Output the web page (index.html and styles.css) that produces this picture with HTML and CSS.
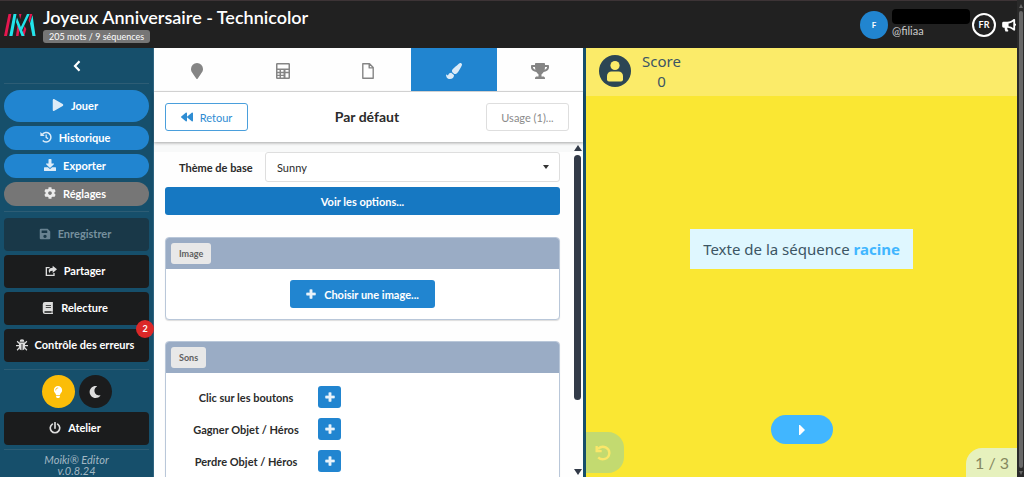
FILE: index.html
```html
<!DOCTYPE html>
<html lang="fr">
<head>
<meta charset="utf-8">
<title>Moiki Editor</title>
<link rel="stylesheet" href="styles.css">
</head>
<body>
<svg class="sprite" aria-hidden="true">
  <symbol id="play" viewBox="0 0 448 512"><path d="M424.4 214.7L72.4 6.6C43.8-10.3 0 6.1 0 47.9V464c0 37.5 40.7 60.1 72.4 41.3l352-208c31.4-18.5 31.5-64.1 0-82.6z"/></symbol>
  <symbol id="history" viewBox="0 0 16 16"><path d="M3.2 4.6A6.3 6.3 0 1 1 3.6 12.6" fill="none" stroke="currentColor" stroke-width="2"/><path d="M.5 1.2v5.6h5.8z"/><path d="M8.2 4.5v4l2.6 1.8" fill="none" stroke="currentColor" stroke-width="1.7"/></symbol>
  <symbol id="download" viewBox="0 0 512 512"><path d="M216 0h80c13.300 0 24 10.700 24 24v168h87.700c17.800 0 26.700 21.500 14.100 34.100L269.700 378.300c-7.500 7.500-19.800 7.500-27.300 0L90.100 226.100c-12.600-12.600-3.700-34.100 14.100-34.100H192V24c0-13.300 10.700-24 24-24zm296 376v112c0 13.300-10.700 24-24 24H24c-13.300 0-24-10.700-24-24V376c0-13.300 10.700-24 24-24h146.700l49 49c20.100 20.100 52.500 20.100 72.600 0l49-49H488c13.300 0 24 10.700 24 24z"/></symbol>
  <symbol id="cog" viewBox="0 0 512 512"><path d="M487.400 315.700l-42.600-24.600c4.300-23.200 4.300-47 0-70.200l42.600-24.600c4.900-2.800 7.100-8.600 5.500-14-11.100-35.600-30-67.800-54.700-94.600-3.800-4.100-10-5.100-14.800-2.300L380.800 110c-17.900-15.400-38.500-27.300-60.800-35.100V25.800c0-5.600-3.900-10.500-9.400-11.700-36.700-8.200-74.300-7.800-109.200 0-5.500 1.200-9.400 6.100-9.400 11.700V75c-22.200 7.900-42.800 19.800-60.800 35.100L88.700 85.500c-4.900-2.800-11-1.900-14.800 2.300-24.700 26.700-43.600 58.900-54.700 94.600-1.700 5.400.6 11.200 5.500 14L67.300 221c-4.300 23.200-4.300 47 0 70.200l-42.600 24.600c-4.900 2.800-7.100 8.600-5.500 14 11.100 35.600 30 67.800 54.700 94.600 3.800 4.100 10 5.100 14.800 2.300l42.600-24.600c17.900 15.400 38.500 27.300 60.800 35.100v49.200c0 5.600 3.900 10.500 9.400 11.700 36.700 8.200 74.300 7.800 109.200 0 5.500-1.200 9.400-6.100 9.400-11.700v-49.200c22.200-7.900 42.800-19.800 60.800-35.100l42.600 24.600c4.900 2.800 11 1.900 14.800-2.300 24.700-26.700 43.600-58.900 54.700-94.600 1.500-5.500-.7-11.300-5.600-14.100zM256 336c-44.100 0-80-35.900-80-80s35.900-80 80-80 80 35.900 80 80-35.900 80-80 80z"/></symbol>
  <symbol id="save" viewBox="0 0 16 16"><path fill-rule="evenodd" d="M2.500 1h9l3.500 3.500v9a1.500 1.500 0 0 1-1.500 1.500h-11a1.500 1.500 0 0 1-1.500-1.500v-11A1.500 1.500 0 0 1 2.500 1zM3.500 3.200v3.500h7.500V3.200zM8 9a2.200 2.200 0 1 0 .01 0z"/></symbol>
  <symbol id="share" viewBox="0 0 18 16"><path d="M7 3H2v11.500h11.500V11" fill="none" stroke="currentColor" stroke-width="2"/><path d="M11.500 0L18 5.500l-6.500 5.500V7.800C8.500 7.600 7 8.500 7.300 11.500 4 8 5.500 3.500 11.500 3.300z"/></symbol>
  <symbol id="book" viewBox="0 0 14 16"><path fill-rule="evenodd" d="M3 0h10.500v12l-.5.500v1.800h.6V16H3a3 3 0 0 1-3-3V3a3 3 0 0 1 3-3zM4 4v1h7V4zM4 6.500v1h7v-1zM3 12.200a1 1 0 0 0 0 2h8.800v-2z"/></symbol>
  <symbol id="bug" viewBox="0 0 16 16"><path d="M4.800 3.500a3.200 3.200 0 0 1 6.400 0zM4 4.700h8v6.800A3.800 3.800 0 0 1 8.600 15V6.500H7.400V15A3.800 3.800 0 0 1 4 11.500z"/><path d="M1.500 3L4.500 6M14.500 3l-3 3M0 8.800h4.500M16 8.800h-4.500M1.500 15l3-3.500M14.500 15l-3-3.500" stroke="currentColor" stroke-width="1.600"/></symbol>
  <symbol id="bulb" viewBox="0 0 352 512"><path d="M96 454c0 6 2 12 5 18l17 26a32 32 0 0 0 27 14h62a32 32 0 0 0 27-14l17-26a32 32 0 0 0 5-18v-38H96zM0 176c0 44 16 85 44 116 16 19 42 58 52 92h160c10-34 36-73 52-92 28-31 44-72 44-116C352 79 273 0 175 0 73 0 0 83 0 176zm176-80c-44 0-80 36-80 80a16 16 0 0 1-32 0c0-62 50-112 112-112a16 16 0 0 1 0 32z"/></symbol>
  <symbol id="moon" viewBox="0 0 512 512"><path d="M283 512c79 0 151-36 199-95 7-9-1-21-12-19-124 23-238-72-238-197 0-72 39-139 102-175 9-5 7-20-4-22A258 258 0 0 0 283 0C142 0 27 115 27 256s115 256 256 256z"/></symbol>
  <symbol id="power" viewBox="0 0 16 16"><path d="M4.500 2.800a6.300 6.300 0 1 0 7 0M8 .8v7.400" fill="none" stroke="currentColor" stroke-width="2.200" stroke-linecap="round"/></symbol>
  <symbol id="pin" viewBox="0 0 384 512"><path d="M172 502C27 291 0 269 0 192a192 192 0 0 1 384 0c0 77-27 99-172 310-10 13-30 13-40 0z"/></symbol>
  <symbol id="calc" viewBox="0 0 14 16"><path fill-rule="evenodd" d="M1.200 0h11.600A1.200 1.200 0 0 1 14 1.200v13.600a1.200 1.200 0 0 1-1.200 1.200H1.200A1.200 1.200 0 0 1 0 14.800V1.200A1.200 1.200 0 0 1 1.200 0zM1.500 1.500v4h11v-4zM1.500 7v1.800h2V7zM5 7v1.800h2.500V7zM9.500 7v1.800h3V7zM1.500 10.300v1.400h2v-1.400zM5 10.300v1.400h2.500v-1.400zM1.500 13v1.500h2V13zM5 13v1.500h2.500V13zM9.500 10.300v4.200h3v-4.200z"/></symbol>
  <symbol id="file" viewBox="0 0 12 16"><path d="M.8.8h6.700l3.700 3.800v10.600H.8zM7.200.8v4.100h4" fill="none" stroke="currentColor" stroke-width="1.400" stroke-linejoin="round"/></symbol>
  <symbol id="brush" viewBox="0 0 512 512"><path d="M167 309c-40 3-76 18-97 73-2 6-8 10-15 10-11 0-45-28-55-35 0 83 38 155 128 155 76 0 128-44 128-120l-1-9zM458 0c-15 0-29 7-40 16C213 199 192 203 192 257c0 14 3 27 9 39l64 53c7 2 14 3 22 3 62 0 98-45 211-256 7-15 14-30 14-46C512 21 486 0 458 0z"/></symbol>
  <symbol id="trophy" viewBox="0 0 576 512"><path d="M552 64H448V24c0-13-11-24-24-24H152c-13 0-24 11-24 24v40H24C11 64 0 75 0 88v56c0 36 22 72 62 101 31 22 70 37 110 41 31 53 68 74 68 74v72h-48c-35 0-64 21-64 56v12c0 7 5 12 12 12h296c7 0 12-5 12-12v-12c0-35-29-56-64-56h-48v-72s37-21 68-74c40-4 79-19 110-41 39-29 62-65 62-101V88c0-13-11-24-24-24zM99 193c-24-18-35-37-35-49v-16h64c1 33 6 61 13 86-15-5-29-12-42-21zM512 144c0 16-18 36-35 49-13 9-27 16-42 21 7-25 12-53 13-86h64z"/></symbol>
  <symbol id="back" viewBox="0 0 512 384"><path d="M11 217l192 160c21 17 53 2 53-25V32c0-27-32-41-53-24L11 168c-15 12-15 36 0 49zm256 0l192 160c21 17 53 2 53-25V32c0-27-32-41-53-24L267 168c-15 12-15 36 0 49z"/></symbol>
  <symbol id="plus" viewBox="0 0 16 16"><path d="M6.200 1h3.600v5.200H15v3.600H9.800V15H6.200V9.800H1V6.200h5.200z" stroke="currentColor" stroke-linejoin="round"/></symbol>
  <symbol id="left" viewBox="0 0 8 12"><path d="M6.500 1.300L2 6l4.500 4.700" fill="none" stroke="currentColor" stroke-width="2.200"/></symbol>
  <symbol id="horn" viewBox="0 0 16 16"><path fill-rule="evenodd" d="M14 1a1 1 0 0 1 1 1v4.200a1.600 1.600 0 0 1 0 3V13.500a1 1 0 0 1-1.600.8C11 12.300 9 11 6 11c0 1.500.5 2.500 1.400 3.600L6.800 15.500H4C3.200 14 2.900 12.500 3 11H1.800A1.600 1.600 0 0 1 .2 9.400V6A1.600 1.600 0 0 1 1.800 4.400H6C9 4.400 11.500 3 13.400 1.200zM7.500 6.300v3c2 .2 3.900 1 5.400 2V4.100c-1.500 1.200-3.400 2-5.400 2.200z"/></symbol>
  <symbol id="undo" viewBox="0 0 16 16"><path d="M3 3.800C8-.8 14.800 3 14.300 8.500 13.800 14 7 16 3.200 12.400" fill="none" stroke="currentColor" stroke-width="2.400"/><path d="M.5 1v6.200h6.200V5L3.200 4.800 2.700 1z"/></symbol>
</svg>

<div class="app">
  <header class="topbar">
    <svg class="logo" viewBox="0 0 32 24" role="img" aria-label="Moiki">
      <path fill="#e5174f" d="M4.500 1h2.800L3 23H0zM15 1h2.500l-1.300 5zM13.500 12l2 4.500-1 6.500H12zM20.500 13l-2.700 10h2.500l2-7zM26 1h2.300l-2.500 9-1.200-2.500zM29 12l2.500 11h-3z"/>
      <path fill="#22e4ea" d="M9.500 1h3L8.500 23H5.300zM13 4.500L20.500 23h-3L12 9zM23 1h2.700l-8 17-1.300-3zM28.500 2l3 21h-3L26 10.500z"/>
    </svg>
    <div class="heading">
      <h1 class="title">Joyeux Anniversaire - Technicolor</h1>
      <span class="stats">205 mots / 9 séquences</span>
    </div>
    <span class="avatar">F</span>
    <div class="user">
      <span class="redacted"></span>
      <span class="handle">@filiaa</span>
    </div>
    <button class="lang">FR</button>
    <button class="news" aria-label="Nouveautés"><svg class="icon"><use href="#horn"/></svg></button>
  </header>

  <nav class="sidebar">
    <button class="collapse" aria-label="Réduire"><svg class="icon"><use href="#left"/></svg></button>
    <div class="group pills">
      <button class="side-btn pill play"><svg class="icon"><use href="#play"/></svg>Jouer</button>
      <button class="side-btn pill"><svg class="icon"><use href="#history"/></svg>Historique</button>
      <button class="side-btn pill"><svg class="icon"><use href="#download"/></svg>Exporter</button>
      <button class="side-btn pill current"><svg class="icon"><use href="#cog"/></svg>Réglages</button>
    </div>
    <div class="group tools">
      <button class="side-btn dark" disabled><svg class="icon"><use href="#save"/></svg>Enregistrer</button>
      <button class="side-btn dark"><svg class="icon"><use href="#share"/></svg>Partager</button>
      <button class="side-btn dark"><svg class="icon"><use href="#book"/></svg>Relecture</button>
      <button class="side-btn dark"><svg class="icon"><use href="#bug"/></svg>Contrôle des erreurs<span class="badge">2</span></button>
    </div>
    <div class="group modes">
      <div class="mode-row">
        <button class="mode light" aria-label="Mode clair"><svg class="icon"><use href="#bulb"/></svg></button>
        <button class="mode" aria-label="Mode sombre"><svg class="icon"><use href="#moon"/></svg></button>
      </div>
      <button class="side-btn dark"><svg class="icon"><use href="#power"/></svg>Atelier</button>
    </div>
    <p class="version">Moiki® Editor<br>v.0.8.24</p>
  </nav>

  <main class="editor">
    <div class="tabs">
      <button class="tab" aria-label="Lieux"><svg class="icon"><use href="#pin"/></svg></button>
      <button class="tab" aria-label="Variables"><svg class="icon"><use href="#calc"/></svg></button>
      <button class="tab" aria-label="Pages"><svg class="icon"><use href="#file"/></svg></button>
      <button class="tab active" aria-label="Thème"><svg class="icon"><use href="#brush"/></svg></button>
      <button class="tab" aria-label="Trophées"><svg class="icon"><use href="#trophy"/></svg></button>
    </div>
    <div class="subbar">
      <button class="outline back"><svg class="icon"><use href="#back"/></svg>Retour</button>
      <h2 class="subtitle">Par défaut</h2>
      <button class="outline usage">Usage (1)...</button>
    </div>
    <div class="scroller">
      <div class="content">
        <div class="field">
          <label class="field-label" for="theme">Thème de base</label>
          <div class="select-wrap">
            <select class="select" id="theme"><option>Sunny</option></select>
            <span class="caret"></span>
          </div>
        </div>
        <button class="options">Voir les options...</button>
        <section class="card">
          <div class="card-head"><span class="tag">Image</span></div>
          <div class="card-body image-body">
            <button class="choose"><svg class="icon"><use href="#plus"/></svg>Choisir une image...</button>
          </div>
        </section>
        <section class="card">
          <div class="card-head"><span class="tag">Sons</span></div>
          <div class="card-body sounds">
            <label class="sound-label" for="s1">Clic sur les boutons</label>
            <button class="add" id="s1"><svg class="icon"><use href="#plus"/></svg></button>
            <label class="sound-label" for="s2">Gagner Objet / Héros</label>
            <button class="add" id="s2"><svg class="icon"><use href="#plus"/></svg></button>
            <label class="sound-label" for="s3">Perdre Objet / Héros</label>
            <button class="add" id="s3"><svg class="icon"><use href="#plus"/></svg></button>
          </div>
        </section>
      </div>
      <div class="scrollbar"><span class="arrow up"></span><span class="track"><span class="thumb"></span></span><span class="arrow down"></span></div>
    </div>
  </main>

  <section class="preview">
    <div class="score-bar">
      <svg class="hero" viewBox="0 0 32 32"><circle cx="16" cy="16" r="16" fill="#2c4654"/><circle cx="16" cy="10.500" r="4.600" fill="#fbeb69"/><path fill="#fbeb69" d="M12.500 16.500h7a4.500 4.500 0 0 1 4.500 4.500v3.500a2 2 0 0 1-2 2H10a2 2 0 0 1-2-2V21a4.500 4.500 0 0 1 4.500-4.500z"/></svg>
      <div class="score">Score<br>0</div>
    </div>
    <div class="stage">
      <p class="sequence">Texte de la séquence <strong class="root">racine</strong></p>
      <button class="next" aria-label="Suivant"><svg class="icon" viewBox="0 0 6 10"><path d="M0 0h1l5 5-5 5H0z"/></svg></button>
    </div>
    <button class="undo" aria-label="Annuler"><svg class="icon"><use href="#undo"/></svg></button>
    <span class="pager">1 / 3</span>
  </section>
  <div class="page-scroll"><span class="page-arrow up"></span><span class="page-thumb"></span><span class="page-arrow down"></span></div>
</div>
</body>
</html>
```

FILE: styles.css
```css
* { box-sizing: border-box; }

body {
  margin: 0;
  font-family: Lato, "Liberation Sans", sans-serif;
  font-size: 11px;
  color: #2b2b2b;
}

button, select {
  margin: 0;
  padding: 0;
  border: 0;
  font: inherit;
  color: inherit;
  background: none;
}

.sprite { position: absolute; width: 0; height: 0; }
.icon { display: block; width: 12px; height: 12px; fill: currentColor; flex: none; }

.app {
  display: grid;
  grid-template: 48px minmax(0, 1fr) / 154px minmax(0, 432fr) minmax(0, 431fr) 7px;
  height: 100vh;
  overflow: hidden;
}

/* Top bar */
.topbar {
  grid-column: 1 / 4;
  display: flex;
  align-items: center;
  padding: 0 1px 0 4px;
  border-top: 1px solid #3d3436;
  background: #212121;
  color: #fff;
}
.logo { width: 32px; height: 24px; margin-right: 7px; }
.heading { flex: 1; }
.title { margin: 0 0 2px; font-size: 18px; font-weight: 600; line-height: 22px; }
.stats {
  display: block;
  width: fit-content;
  padding: 0 6px;
  border-radius: 3px;
  background: #767676;
  font-size: 9px;
  line-height: 13px;
}
.avatar {
  width: 28px;
  margin-right: 4px;
  border-radius: 50%;
  background: #2185d0;
  font-size: 8px;
  font-weight: 700;
  line-height: 28px;
  text-align: center;
}
.user { display: flex; flex-direction: column; width: 80px; padding-bottom: 3px; line-height: 14px; color: #ccc; }
.redacted { width: 78px; height: 15px; border-radius: 4px; background: #000; }
.lang {
  width: 24px;
  height: 24px;
  border: 2px solid #fff;
  border-radius: 50%;
  font-size: 9px;
  font-weight: 700;
}
.news { margin-left: 6px; }
.news .icon { width: 14px; height: 14px; }

/* Sidebar */
.sidebar {
  display: flex;
  flex-direction: column;
  padding: 0 4px;
  border-right: 1px solid #2f6480;
  background: #164f6b;
  color: #fff;
}
.collapse { display: grid; place-items: center; height: 35px; }
.group {
  display: flex;
  flex-direction: column;
  gap: 4px;
  border-top: 1px solid #2d5d75;
}
.pills { padding: 6px 0 5px; }
.tools { padding: 6px 0 7px; }
.modes { padding: 5px 0 4px; }
.side-btn {
  position: relative;
  display: flex;
  align-items: center;
  justify-content: center;
  gap: 7px;
  height: 33px;
  padding: 0 3px 2px 0;
  border-radius: 4px;
  font-weight: 700;
}
.side-btn .icon { opacity: 0.85; }
.pill { height: 24px; border-radius: 16px; background: #2185d0; }
.play { height: 32px; }
.current { background: #767676; }
.dark { background: #1b1c1d; }
.dark:disabled { background: #193848; color: #76909e; }
.badge {
  position: absolute;
  top: -9px;
  right: -5px;
  width: 18px;
  border-radius: 50%;
  background: #db2828;
  font-size: 9px;
  line-height: 18px;
  text-align: center;
}
.mode-row { display: flex; justify-content: center; gap: 4px; }
.mode {
  display: grid;
  place-items: center;
  width: 33px;
  height: 33px;
  border-radius: 50%;
  background: #1b1c1d;
  color: #ddd;
}
.light { background: #fbbd08; color: #fff; }
.version {
  margin: 0;
  padding-top: 4px;
  border-top: 1px solid #2d5d75;
  color: #a3b8c3;
  font-style: italic;
  line-height: 11px;
  text-align: center;
}

/* Editor */
.editor {
  display: flex;
  flex-direction: column;
  border-right: 3px solid #164f6b;
  background: #fefefe;
}
.tabs { display: flex; height: 44px; border-bottom: 1px solid #dedede; }
.tab { flex: 1; display: grid; place-items: center; padding-top: 2px; color: #858585; }
.tab .icon { width: 18px; height: 16px; }
.active { background: #2185d0; color: #dcebf7; }
.subbar {
  z-index: 1;
  display: flex;
  align-items: center;
  justify-content: space-between;
  height: 50px;
  padding: 0 14px 0 11px;
  background: #fff;
  box-shadow: 0 1px 3px #0005;
}
.subtitle { margin: 0; padding-bottom: 2px; font-size: 14px; }
.outline {
  display: flex;
  align-items: center;
  justify-content: center;
  gap: 7px;
  width: 83px;
  height: 28px;
  border: 1px solid #dedede;
  border-radius: 3px;
  color: #8a8a8a;
}
.back { border-color: #4a9fdc; color: #2f8dd3; }
.scroller { flex: 1; display: flex; min-height: 0; border-top: 10px solid #f8f9f9; }
.content {
  flex: 1;
  display: flex;
  flex-direction: column;
  min-width: 0;
  overflow: hidden;
  padding: 0 12px 0 11px;
}
.content > * { flex: none; }
.field { display: flex; align-items: center; margin-bottom: 5px; }
.field-label { width: 100px; padding-left: 14px; font-weight: 700; }
.select-wrap { position: relative; flex: 1; }
.select {
  appearance: none;
  display: block;
  width: 100%;
  height: 30px;
  padding: 0 11px;
  border: 1px solid #dedede;
  border-radius: 3px;
  background: #fff;
}
.caret {
  position: absolute;
  top: 13px;
  right: 11px;
  border: 3px solid transparent;
  border-top: 4px solid #333;
  pointer-events: none;
}
.options {
  height: 28px;
  margin-bottom: 22px;
  border-radius: 3px;
  background: #1678c2;
  color: #fff;
  font-weight: 700;
}
.card {
  margin-bottom: 21px;
  border: 1px solid #b9c7d9;
  border-radius: 4px;
  background: #fff;
  box-shadow: 0 1px 1px #0002;
}
.card-head { padding: 5px; background: #9aacc5; border-radius: 3px 3px 0 0; }
.tag {
  display: block;
  width: fit-content;
  padding: 0 8px;
  border-radius: 3px;
  background: #e8e8e8;
  color: #606060;
  font-size: 9px;
  font-weight: 700;
  line-height: 21px;
}
.image-body { display: flex; justify-content: center; padding: 11px 0; }
.choose {
  display: flex;
  align-items: center;
  gap: 8px;
  height: 28px;
  padding: 0 16px;
  border-radius: 3px;
  background: #2185d0;
  color: #fff;
  font-weight: 700;
}
.choose .icon, .add .icon { width: 10px; opacity: 0.9; }
.sounds {
  display: grid;
  grid-template-columns: 130px 23px;
  column-gap: 7px;
  row-gap: 10px;
  align-items: center;
  padding: 13px 15px;
}
.sound-label { font-weight: 700; text-align: center; }
.add {
  display: grid;
  place-items: center;
  height: 22px;
  border-radius: 3px;
  background: #2185d0;
  color: #fff;
}
.scrollbar { display: flex; flex-direction: column; align-items: center; width: 11px; }
.track { flex: 1; }
.thumb { display: block; width: 7px; height: 77%; margin-top: 4px; border-radius: 4px; background: #323a48; }
.arrow { border: 4px solid transparent; }
.arrow.up { margin-top: -7px; border-top: 0; border-bottom: 6px solid #323a48; }
.arrow.down { margin-bottom: 2px; border-bottom: 0; border-top: 6px solid #323a48; }

/* Preview */
.preview {
  position: relative;
  display: flex;
  flex-direction: column;
  background: #fae733;
  font-family: "Noto Sans", "Open Sans", sans-serif;
  font-size: 15px;
  color: #3c5564;
}
.score-bar {
  display: flex;
  align-items: center;
  gap: 11px;
  height: 48px;
  padding: 0 13px 2px;
  background: #fbeb69;
}
.hero { width: 32px; height: 32px; }
.score { line-height: 20px; text-align: center; font-size: 15px; }
.stage {
  flex: 1;
  display: flex;
  flex-direction: column;
  align-items: center;
  justify-content: space-between;
  padding: 133px 0 33px;
}
.sequence { margin: 0; padding: 0 13px; background: #dff7ff; line-height: 40px; }
.root { color: #41b6ff; }
.next {
  display: grid;
  place-items: center;
  width: 62px;
  height: 29px;
  border-radius: 15px;
  background: #41b6ff;
  color: #fff;
}
.next .icon { width: 6px; height: 10px; }
.undo {
  position: absolute;
  left: 0;
  bottom: 4px;
  display: grid;
  place-items: center;
  width: 38px;
  height: 41px;
  padding-right: 4px;
  border-radius: 0 16px 16px 0;
  background: #c3da70;
  color: #fae769;
}
.undo .icon { width: 16px; height: 16px; }
.pager {
  position: absolute;
  right: 0;
  bottom: 0;
  padding: 1px 8px 0 9px;
  border-radius: 16px 0 0 0;
  background: #e6f1bd;
  color: #85885f;
  font-family: Lato, sans-serif;
  font-size: 16px;
  line-height: 28px;
}

/* Page scrollbar */
.page-scroll {
  grid-column: 4;
  grid-row: 1 / 3;
  display: flex;
  flex-direction: column;
  align-items: center;
  gap: 3px;
  padding: 4px 0 2px;
  background: #2a2a2a;
}
.page-thumb { flex: 1; width: 4px; border-radius: 2px; background: #686868; }
.page-arrow { border: 2px solid transparent; }
.page-arrow.up { border-top: 0; border-bottom: 4px solid #686868; }
.page-arrow.down { border-bottom: 0; border-top: 4px solid #686868; }
```
